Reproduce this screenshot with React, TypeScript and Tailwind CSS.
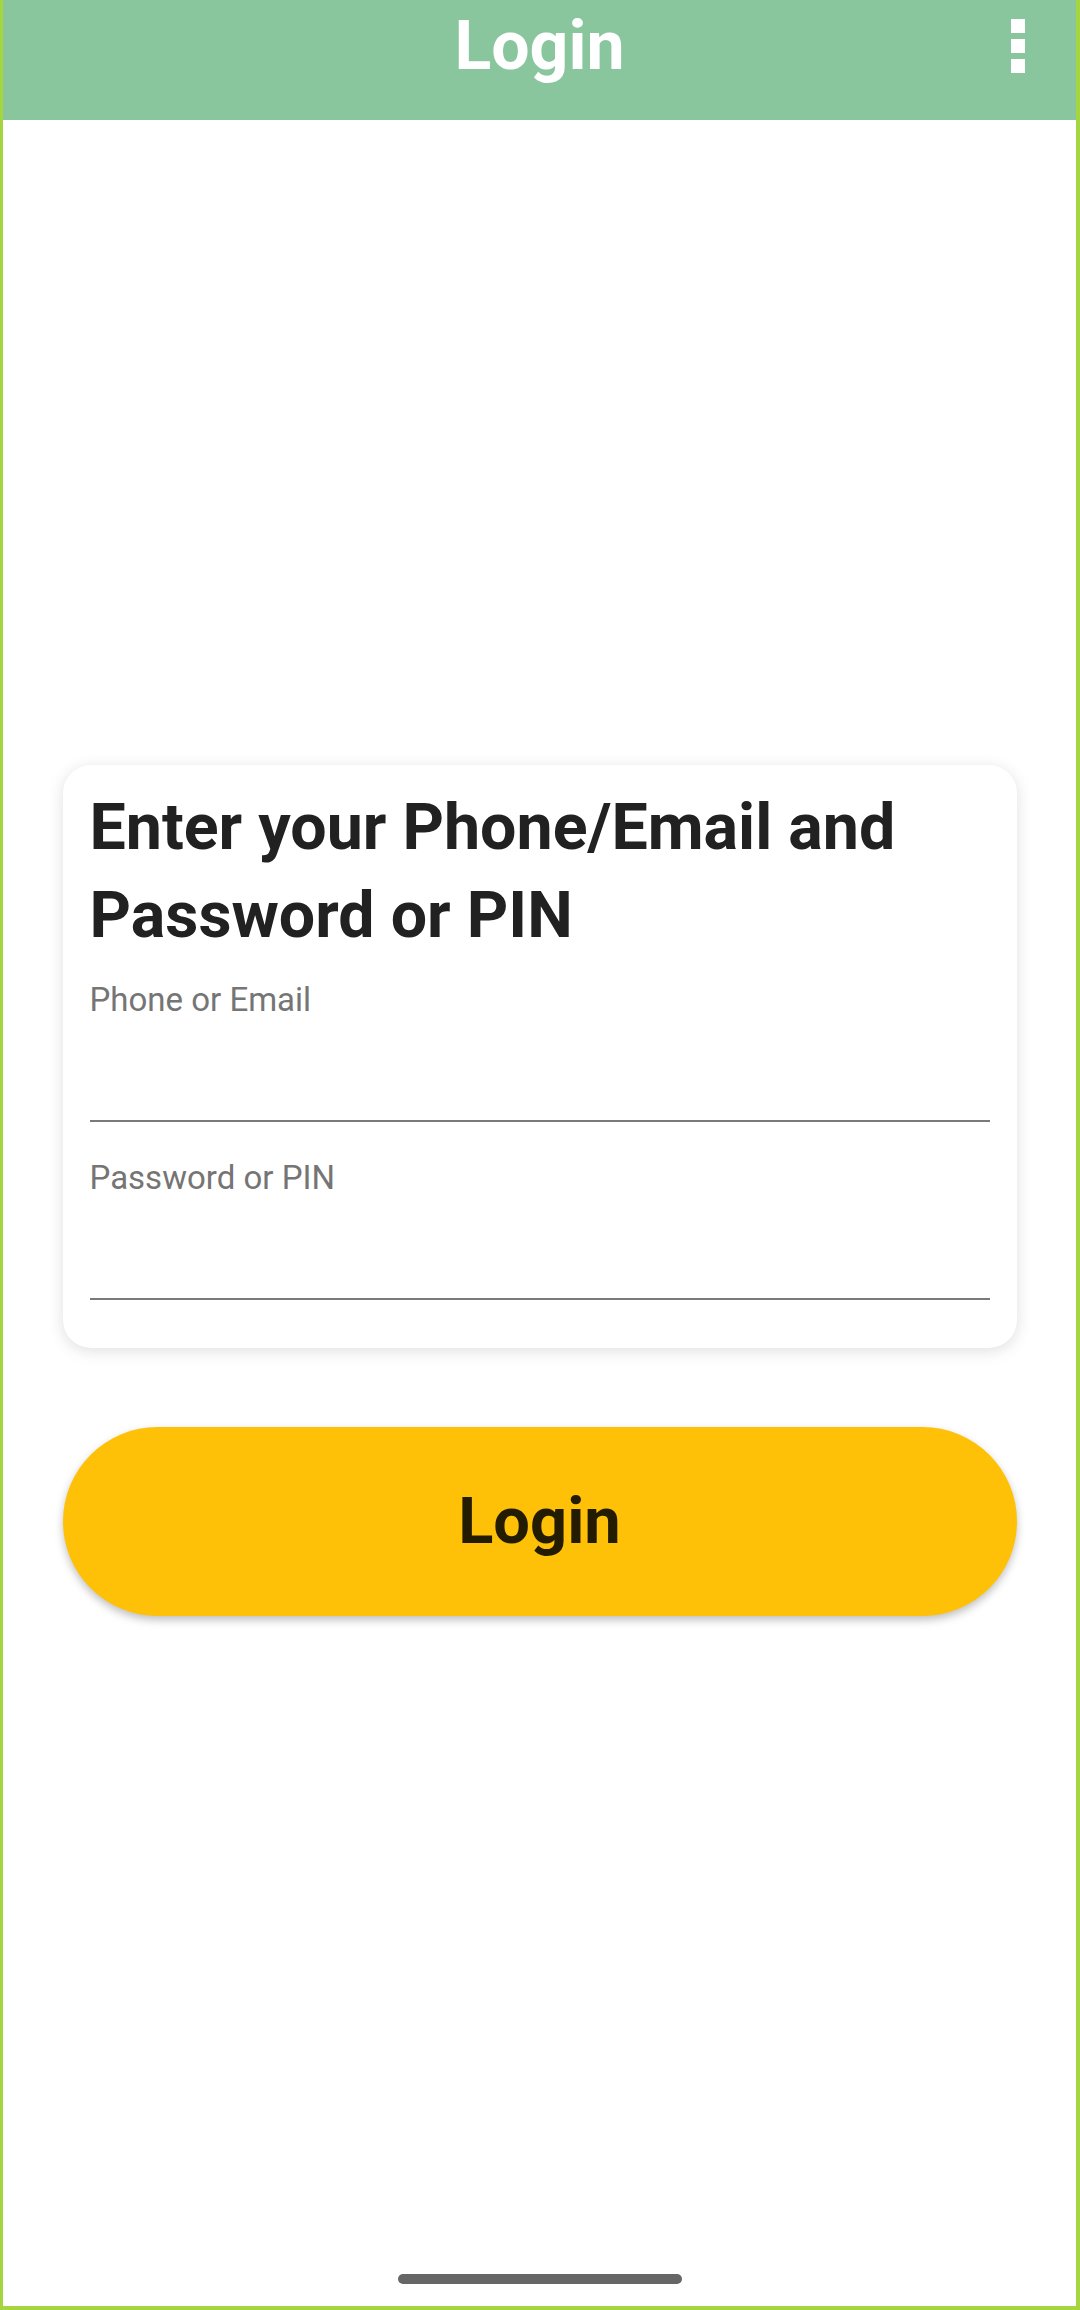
// Login screen
const Field = ({ label }: { label: string }) => (
  <div className="flex flex-col">
    <label className="text-[33px] leading-[49px] text-[#757575]">{label}</label>
    <div className="h-[98px] border-b-2 border-[#7a7a7a]" />
  </div>
);

const App = () => {
  return (
    <div
      className="min-h-[2310px] flex flex-col bg-white border-l-[3px] border-r-4 border-b-4 border-[#a6d63f]"
      style={{ fontFamily: "Roboto, 'Noto Sans', sans-serif" }}
    >
      {/* ---------- App bar ---------- */}
      <header className="h-[120px] bg-[#89c69e] grid grid-cols-[1fr_auto_1fr]">
        <div />
        <h1 className="pt-[6px] text-[68px] leading-[80px] font-bold text-white">Login</h1>
        <div className="flex justify-end pr-[51px] pt-[19px]">
          <div className="flex flex-col gap-[6px]">
            <span className="w-[14px] h-[14px] bg-white" />
            <span className="w-[14px] h-[14px] bg-white" />
            <span className="w-[14px] h-[14px] bg-white" />
          </div>
        </div>
      </header>

      {/* ---------- Form ---------- */}
      <main className="w-[954px] mx-auto mt-[645px] flex flex-col">
        <div className="bg-white rounded-[28px] shadow-[0_3px_16px_rgba(0,0,0,0.13)] px-[27px] pt-[18px] pb-[48px]">
          <h2 className="text-[64.5px] leading-[88px] font-bold text-[#212121]">
            Enter your Phone/Email and Password or PIN
          </h2>
          <div className="mt-[16px] flex flex-col gap-[31px]">
            <Field label="Phone or Email" />
            <Field label="Password or PIN" />
          </div>
        </div>

        <button className="mt-[79px] h-[189px] w-full rounded-full bg-[#ffc107] shadow-[0_4px_8px_rgba(0,0,0,0.25)] text-[65px] font-bold text-[#231c00]">
          Login
        </button>
      </main>

      <div className="flex-1" />

      {/* ---------- Home indicator ---------- */}
      <div className="mb-[22px] mx-auto w-[284px] h-[10px] rounded-full bg-[#666666]" />
    </div>
  );
};

export default App;
